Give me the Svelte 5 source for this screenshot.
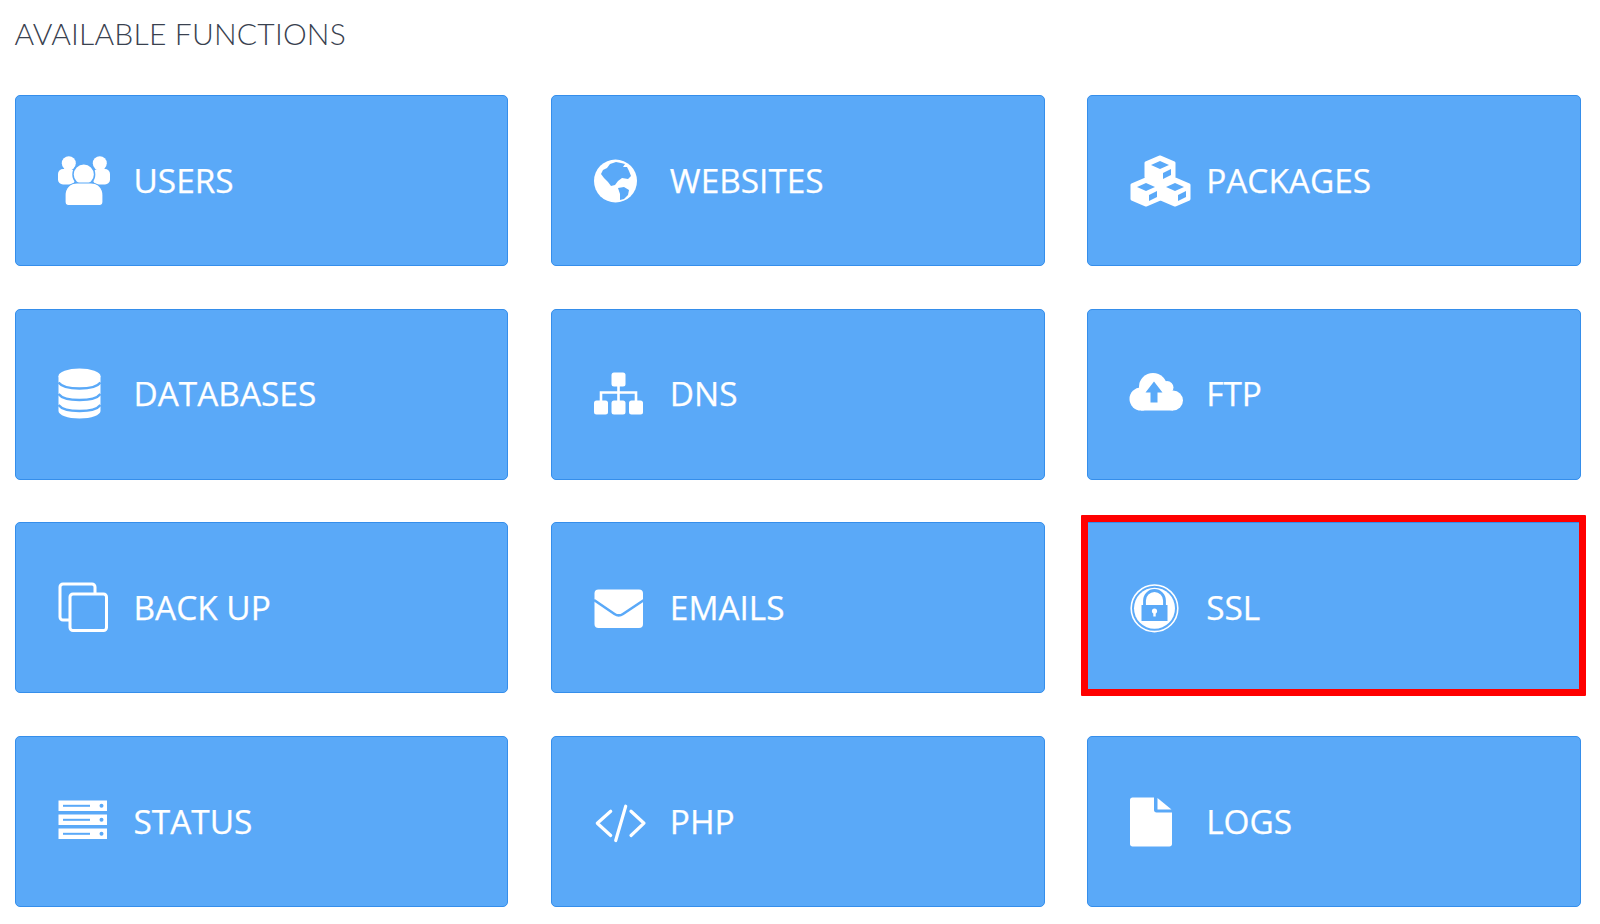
<script>
	const blue = '#5aa9f8';
	const functions = [
		{ label: 'USERS', icon: 'users' },
		{ label: 'WEBSITES', icon: 'globe' },
		{ label: 'PACKAGES', icon: 'cubes' },
		{ label: 'DATABASES', icon: 'database' },
		{ label: 'DNS', icon: 'sitemap' },
		{ label: 'FTP', icon: 'cloud' },
		{ label: 'BACK UP', icon: 'copy' },
		{ label: 'EMAILS', icon: 'mail' },
		{ label: 'SSL', icon: 'lock', marked: true },
		{ label: 'STATUS', icon: 'server' },
		{ label: 'PHP', icon: 'code' },
		{ label: 'LOGS', icon: 'file' }
	];
	const cubes = [
		[33, 21],
		[19, 43],
		[48, 43]
	];
	const hex = (x, y) =>
		`${x},${y - 13} ${x + 14},${y - 7} ${x + 14},${y + 7} ${x},${y + 13} ${x - 14},${y + 7} ${x - 14},${y - 7}`;
</script>

<main>
	<h1>AVAILABLE FUNCTIONS</h1>
	<div class="grid">
		{#each functions as f}
			<a class="card" class:marked={f.marked} href="#{f.icon}">
				<svg viewBox="0 0 64 64" width="64" height="64" fill="#fff" aria-hidden="true">
					{#if f.icon === 'users'}
						<circle cx="13.8" cy="14.2" r="7" />
						<circle cx="44.8" cy="14.2" r="7" />
						<rect x="3" y="20" width="17" height="15.500" rx="5" />
						<rect x="38" y="20" width="17" height="15.500" rx="5" />
						<circle cx="28.800" cy="25.500" r="10.800" stroke={blue} stroke-width="1.500" />
						<path d="M10 46c0-7 5-12 12-12h14c7 0 12 5 12 12v7c0 2-1.500 3.500-3.500 3.500h-31C11.500 56.500 10 55 10 53z" stroke={blue} stroke-width="1.200" />
					{:else if f.icon === 'globe'}
						<circle cx="24.5" cy="32" r="21.5" />
						<path
							d="M12 21l4-2 3-4 6-2 5 1 4 1-2 3 4 0 2 4 2 5-3 3-6-1-4 3-3 4-4 1-3-4-4-4-3-4z"
							fill={blue}
						/>
						<path d="M27 39l6-1 5 3-1 5-4 4-4 1 0-6z" fill={blue} />
					{:else if f.icon === 'cubes'}
						{#each cubes as [x, y]}
							<polygon points={hex(x, y)} stroke="#fff" stroke-width="3" stroke-linejoin="round" />
							<polygon points="{x},{y - 9} {x + 9},{y - 5} {x},{y - 1} {x - 9},{y - 5}" fill={blue} />
							<polygon points="{x + 3},{y + 3} {x + 11},{y - 1} {x + 11},{y + 5} {x + 3},{y + 9}" fill={blue} />
						{/each}
					{:else if f.icon === 'database'}
						<ellipse cx="24.500" cy="14" rx="21" ry="7.500" />
						<path d="M3.500 14h42v35c0 4-9 7.500-21 7.500S3.500 53 3.500 49z" />
						<g fill="none" stroke={blue} stroke-width="2.400">
							<path d="M3.500 20.500c3 4 12 6 21 6s18-2 21-6" />
							<path d="M3.500 32c3 4 12 6 21 6s18-2 21-6" />
							<path d="M3.500 43c3 4 12 6 21 6s18-2 21-6" />
						</g>
					{:else if f.icon === 'sitemap'}
						<rect x="20.500" y="10.500" width="14" height="14" rx="2.500" />
						<rect x="3" y="38.500" width="14" height="14" rx="2.500" />
						<rect x="20.500" y="38.500" width="14" height="14" rx="2.500" />
						<rect x="38" y="38.500" width="14" height="14" rx="2.500" />
						<path d="M27.500 23v17M10 40v-9.500h35V40" fill="none" stroke="#fff" stroke-width="2.600" />
					{:else if f.icon === 'cloud'}
						<circle cx="26" cy="25" r="14" />
						<circle cx="14" cy="37" r="11.500" />
						<circle cx="46" cy="38.500" r="10" />
						<circle cx="40" cy="25.500" r="6.500" />
						<rect x="14" y="30" width="32" height="18.500" />
						<path d="M27 19.500l8.500 11h-5v10h-7v-10h-5z" fill={blue} />
					{:else if f.icon === 'copy'}
						<g stroke="#fff" stroke-width="3" fill="none">
							<rect x="5" y="8" width="35" height="36" rx="3" />
							<rect x="15" y="18" width="36.500" height="36.500" rx="3" fill={blue} />
						</g>
					{:else if f.icon === 'mail'}
						<rect x="3.500" y="13.500" width="48.500" height="38.500" rx="4" />
						<path d="M3 24l20.500 14c3 2 5.500 2 8.500 0L53 24" fill="none" stroke={blue} stroke-width="2.600" />
					{:else if f.icon === 'lock'}
						<circle cx="27.500" cy="32.300" r="23.300" fill="none" stroke="#fff" stroke-width="1.600" />
						<circle cx="27.500" cy="32.300" r="20.500" />
						<path d="M17.500 30v-5.500a10 10 0 0 1 20 0V30" fill="none" stroke={blue} stroke-width="2.800" />
						<rect x="14.500" y="29" width="26" height="16" fill={blue} />
						<circle cx="27.500" cy="35" r="2.600" />
						<rect x="26.300" y="35.500" width="2.400" height="5" />
					{:else if f.icon === 'server'}
						{#each [10.5, 24.5, 38.5] as y}
							<rect x="3.500" {y} width="48.500" height="10.500" />
							<rect x="8" y={y + 4.3} width="27" height="2" fill={blue} />
							<circle cx="46.500" cy={y + 5.2} r="2" fill={blue} />
						{/each}
					{:else if f.icon === 'code'}
						<path
							d="M19.700 21.200L6.300 33.200l13.400 12.300M34.700 16.200l-10 34.300M40 21.200l13 12-13 12.300"
							fill="none"
							stroke="#fff"
							stroke-width="3.200"
							stroke-linecap="round"
							stroke-linejoin="round"
						/>
					{:else if f.icon === 'file'}
						<path d="M3 10c0-1.500 1-2.500 2.500-2.500H27V20c0 1.500 1 2.500 2.500 2.500H45V54c0 1.500-1 2.500-2.500 2.500h-37C4 56.500 3 55.500 3 54z" />
						<path d="M30.500 8l14 11.500h-14z" />
					{/if}
				</svg>
				<span>{f.label}</span>
				{#if f.marked}<i class="mark"></i>{/if}
			</a>
		{/each}
	</div>
</main>

<style>
	:global(body) {
		background: #fff;
	}

	main {
		padding: 0 19px 0 14.5px;
		box-sizing: border-box;
		width: 1600px;
	}

	h1 {
		margin: 0;
		padding-top: 15px;
		height: 95px;
		box-sizing: border-box;
		font: 300 30px/36px Lato, sans-serif;
		letter-spacing: 0.2px;
		color: #39414f;
	}

	.grid {
		display: grid;
		grid-template-columns: repeat(3, 1fr);
		grid-auto-rows: 171px;
		gap: 42.7px 42.5px;
	}

	.card {
		position: relative;
		display: flex;
		align-items: center;
		gap: 15px;
		padding-left: 40px;
		background: #5aa9f8;
		border: 1px solid #358eeb;
		border-radius: 5px;
		box-sizing: border-box;
		color: #fff;
		text-decoration: none;
		font: 400 33.4px/1 "Open Sans", sans-serif;
		-webkit-text-stroke: 0.25px #fff;
	}

	.card.marked {
		border-radius: 0;
	}

	svg {
		flex: none;
		overflow: visible;
		margin-left: -1px;
	}

	/* red annotation drawn over the SSL card */
	.mark {
		position: absolute;
		top: -8px;
		left: -7px;
		right: -6px;
		bottom: -4px;
		border: 7px solid #f00;
		border-radius: 1px;
		pointer-events: none;
	}
</style>
